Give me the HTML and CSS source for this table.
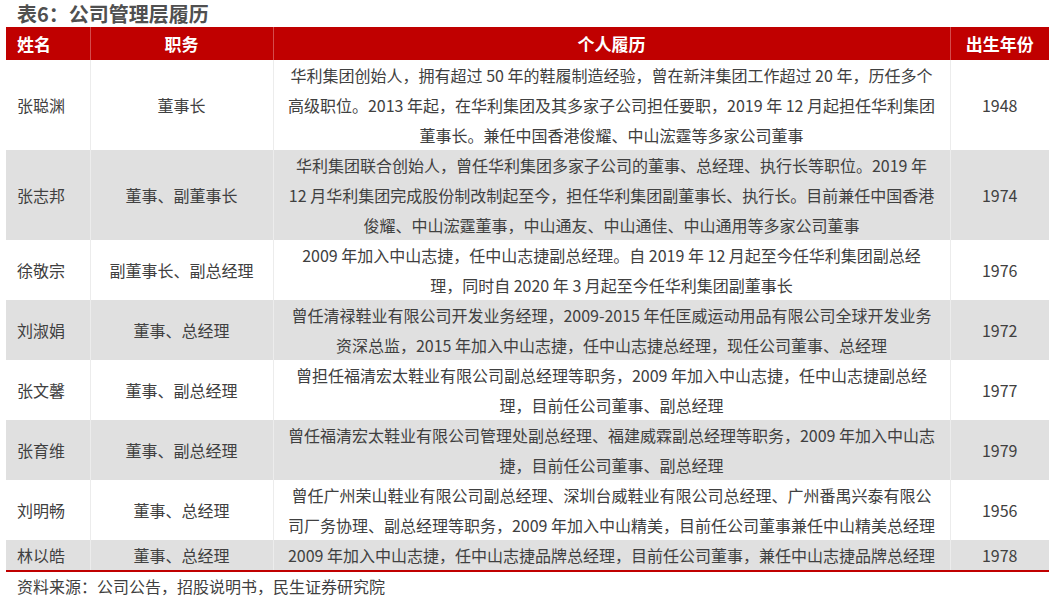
FILE: index.html
```html
<!DOCTYPE html>
<html lang="zh-CN">
<head>
<meta charset="utf-8">
<title>表6：公司管理层履历</title>
<link rel="stylesheet" href="styles.css">
</head>
<body>
<div class="page">
  <h1 class="title">表6：公司管理层履历</h1>
  <table class="resume">
    <colgroup>
      <col class="c-name"><col class="c-role"><col class="c-bio"><col class="c-year">
    </colgroup>
    <thead>
      <tr><th class="left">姓名</th><th>职务</th><th>个人履历</th><th>出生年份</th></tr>
    </thead>
    <tbody>
      <tr>
        <td class="left">张聪渊</td><td>董事长</td>
        <td>华利集团创始人，拥有超过 50 年的鞋履制造经验，曾在新沣集团工作超过 20 年，历任多个<br>高级职位。2013 年起，在华利集团及其多家子公司担任要职，2019 年 12 月起担任华利集团<br>董事长。兼任中国香港俊耀、中山浤霆等多家公司董事</td>
        <td>1948</td>
      </tr>
      <tr class="alt">
        <td class="left">张志邦</td><td>董事、副董事长</td>
        <td>华利集团联合创始人，曾任华利集团多家子公司的董事、总经理、执行长等职位。2019 年<br>12 月华利集团完成股份制改制起至今，担任华利集团副董事长、执行长。目前兼任中国香港<br>俊耀、中山浤霆董事，中山通友、中山通佳、中山通用等多家公司董事</td>
        <td>1974</td>
      </tr>
      <tr>
        <td class="left">徐敬宗</td><td>副董事长、副总经理</td>
        <td>2009 年加入中山志捷，任中山志捷副总经理。自 2019 年 12 月起至今任华利集团副总经<br>理，同时自 2020 年 3 月起至今任华利集团副董事长</td>
        <td>1976</td>
      </tr>
      <tr class="alt">
        <td class="left">刘淑娟</td><td>董事、总经理</td>
        <td>曾任清禄鞋业有限公司开发业务经理，2009-2015 年任匡威运动用品有限公司全球开发业务<br>资深总监，2015 年加入中山志捷，任中山志捷总经理，现任公司董事、总经理</td>
        <td>1972</td>
      </tr>
      <tr>
        <td class="left">张文馨</td><td>董事、副总经理</td>
        <td>曾担任福清宏太鞋业有限公司副总经理等职务，2009 年加入中山志捷，任中山志捷副总经<br>理，目前任公司董事、副总经理</td>
        <td>1977</td>
      </tr>
      <tr class="alt">
        <td class="left">张育维</td><td>董事、副总经理</td>
        <td>曾任福清宏太鞋业有限公司管理处副总经理、福建威霖副总经理等职务，2009 年加入中山志<br>捷，目前任公司董事、副总经理</td>
        <td>1979</td>
      </tr>
      <tr>
        <td class="left">刘明畅</td><td>董事、总经理</td>
        <td>曾任广州荣山鞋业有限公司副总经理、深圳台威鞋业有限公司总经理、广州番禺兴泰有限公<br>司厂务协理、副总经理等职务，2009 年加入中山精美，目前任公司董事兼任中山精美总经理</td>
        <td>1956</td>
      </tr>
      <tr class="alt last">
        <td class="left">林以皓</td><td>董事、总经理</td>
        <td>2009 年加入中山志捷，任中山志捷品牌总经理，目前任公司董事，兼任中山志捷品牌总经理</td>
        <td>1978</td>
      </tr>
    </tbody>
  </table>
  <p class="source">资料来源：公司公告，招股说明书，民生证券研究院</p>
</div>
</body>
</html>
```

FILE: styles.css
```css
* { box-sizing: border-box; }
html, body { margin: 0; padding: 0; background: #ffffff; }
body {
  font-family: "Microsoft YaHei", "Noto Sans CJK SC", "Noto Sans", sans-serif;
  color: #404040;
}
.page { padding: 0 5px 0 6px; width: 1054px; }
.title {
  margin: 0;
  height: 27px;
  line-height: 27px;
  padding-left: 11px;
  font-size: 20px;
  font-weight: 700;
  color: #505050;
}
.resume {
  border-collapse: collapse;
  table-layout: fixed;
  width: 1043px;
  font-size: 16px;
}
.c-name { width: 84px; }
.c-role { width: 183px; }
.c-bio { width: 677px; }
.c-year { width: 99px; }
.resume th {
  background: #c00000;
  color: #ffffff;
  font-size: 17px;
  font-weight: 700;
  height: 33px;
  line-height: 33px;
  padding: 0;
  text-align: center;
  border-left: 1px solid #d44c4c;
}
.resume th:first-child, .resume td:first-child { border-left: none; }
.resume td {
  padding: 0;
  line-height: 30px;
  text-align: center;
  vertical-align: middle;
  white-space: nowrap;
  border-left: 1px solid #ececec;
}
.resume .left { text-align: left; padding-left: 11px; }
.resume tr.alt td { background: #e0e0e0; }
.resume tr.last td { border-bottom: 2px solid #c00000; }
.source {
  margin: 0;
  padding-left: 11px;
  font-size: 16px;
  line-height: 28px;
  color: #404040;
}
```
